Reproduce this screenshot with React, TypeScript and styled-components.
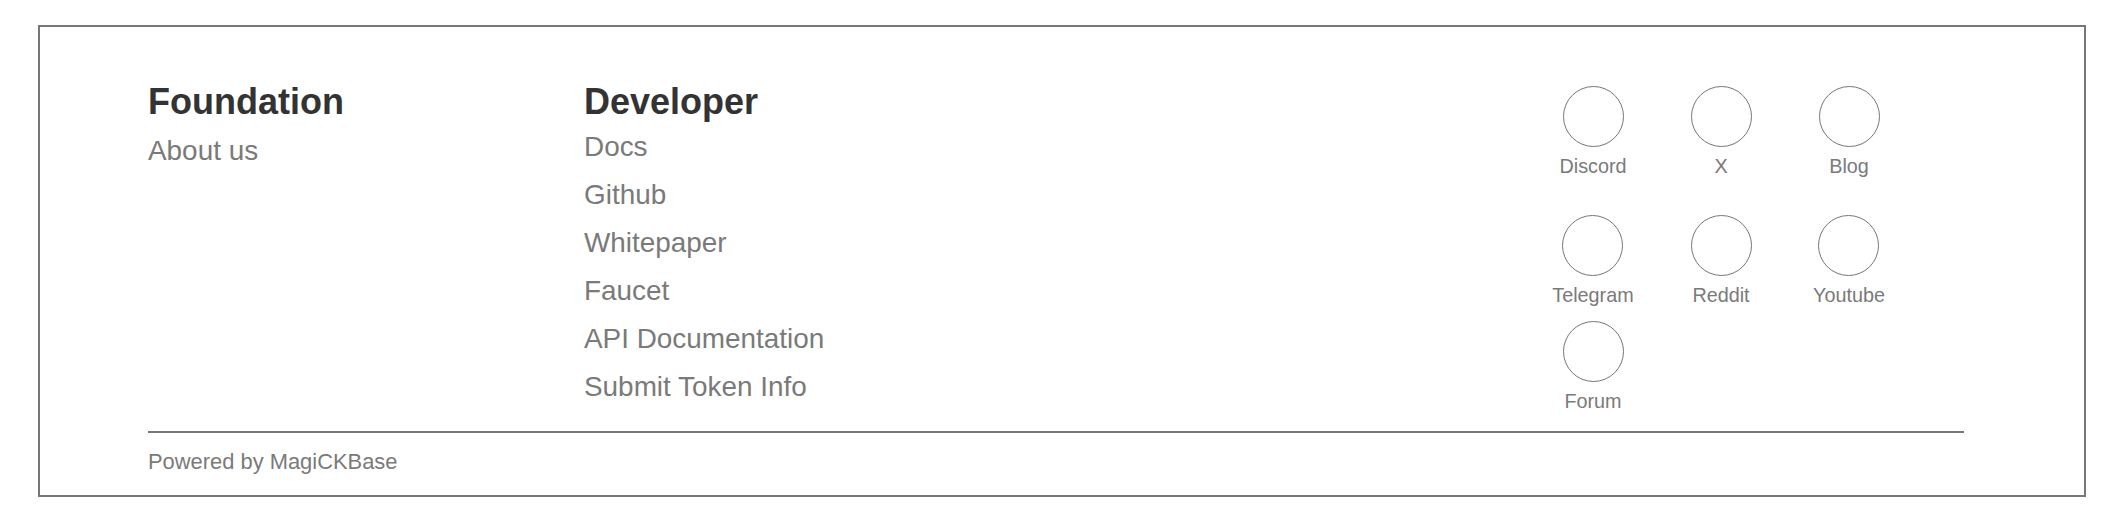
import React from "react";
import styled, { createGlobalStyle } from "styled-components";

const GlobalStyle = createGlobalStyle`
  html, body {
    margin: 0;
    padding: 0;
    background: #ffffff;
  }
  body {
    font-family: "Liberation Sans", Arial, Helvetica, sans-serif;
  }
`;

const FooterBox = styled.footer`
  margin: 25px 26px 0 38px;
  border: 2px solid #777777;
  padding: 55px 120px 21px 108px;
  box-sizing: border-box;
`;

const MainRow = styled.div`
  display: flex;
  align-items: flex-start;
`;

const Column = styled.div<{ $width: number }>`
  width: ${(p) => p.$width}px;
  flex: 0 0 auto;
  display: flex;
  flex-direction: column;
`;

const Heading = styled.h3`
  margin: 0;
  font-size: 36px;
  line-height: 40.8px;
  font-weight: 700;
  color: #333333;
`;

const LinkList = styled.ul<{ $offset: number }>`
  list-style: none;
  margin: ${(p) => p.$offset}px 0 0 0;
  padding: 0;
  display: flex;
  flex-direction: column;
`;

const LinkItem = styled.li`
  font-size: 27.9px;
  line-height: 48px;
  color: #7a7a7a;
  white-space: nowrap;
`;

const Social = styled.div`
  margin-top: 3.5px;
  display: flex;
  flex-direction: column;
`;

const SocialGrid = styled.div<{ $offset: number }>`
  display: grid;
  grid-template-columns: repeat(3, 128px);
  row-gap: 38px;
  justify-items: center;
  margin-top: ${(p) => p.$offset}px;
`;

const SocialItem = styled.a`
  display: flex;
  flex-direction: column;
  align-items: center;
  text-decoration: none;
`;

const Circle = styled.span`
  display: block;
  width: 61px;
  height: 61px;
  box-sizing: border-box;
  border: 1.5px solid #777777;
  border-radius: 50%;
`;

const SocialLabel = styled.span`
  margin-top: 9px;
  font-size: 19.8px;
  line-height: 21.85px;
  color: #7a7a7a;
  white-space: nowrap;
`;

const Separator = styled.hr`
  margin: 18px 0 0 0;
  border: none;
  height: 2px;
  background: #777777;
`;

const Powered = styled.div`
  margin-top: 16px;
  font-size: 21.9px;
  line-height: 25.2px;
  color: #7a7a7a;
`;

const developerLinks = [
  "Docs",
  "Github",
  "Whitepaper",
  "Faucet",
  "API Documentation",
  "Submit Token Info",
];

const socialRows = [
  ["Discord", "X", "Blog", "Telegram", "Reddit", "Youtube"],
  ["Forum"],
];

export default function App() {
  return (
    <>
      <GlobalStyle />
      <FooterBox>
        <MainRow>
          <Column $width={436}>
            <Heading>Foundation</Heading>
            <LinkList $offset={4}>
              <LinkItem>About us</LinkItem>
            </LinkList>
          </Column>
          <Column $width={945}>
            <Heading>Developer</Heading>
            <LinkList $offset={0}>
              {developerLinks.map((l) => (
                <LinkItem key={l}>{l}</LinkItem>
              ))}
            </LinkList>
          </Column>
          <Social>
            {socialRows.map((row, i) => (
              <SocialGrid key={i} $offset={i === 0 ? 0 : 14}>
                {row.map((name) => (
                  <SocialItem key={name}>
                    <Circle />
                    <SocialLabel>{name}</SocialLabel>
                  </SocialItem>
                ))}
              </SocialGrid>
            ))}
          </Social>
        </MainRow>
        <Separator />
        <Powered>Powered by MagiCKBase</Powered>
      </FooterBox>
    </>
  );
}
